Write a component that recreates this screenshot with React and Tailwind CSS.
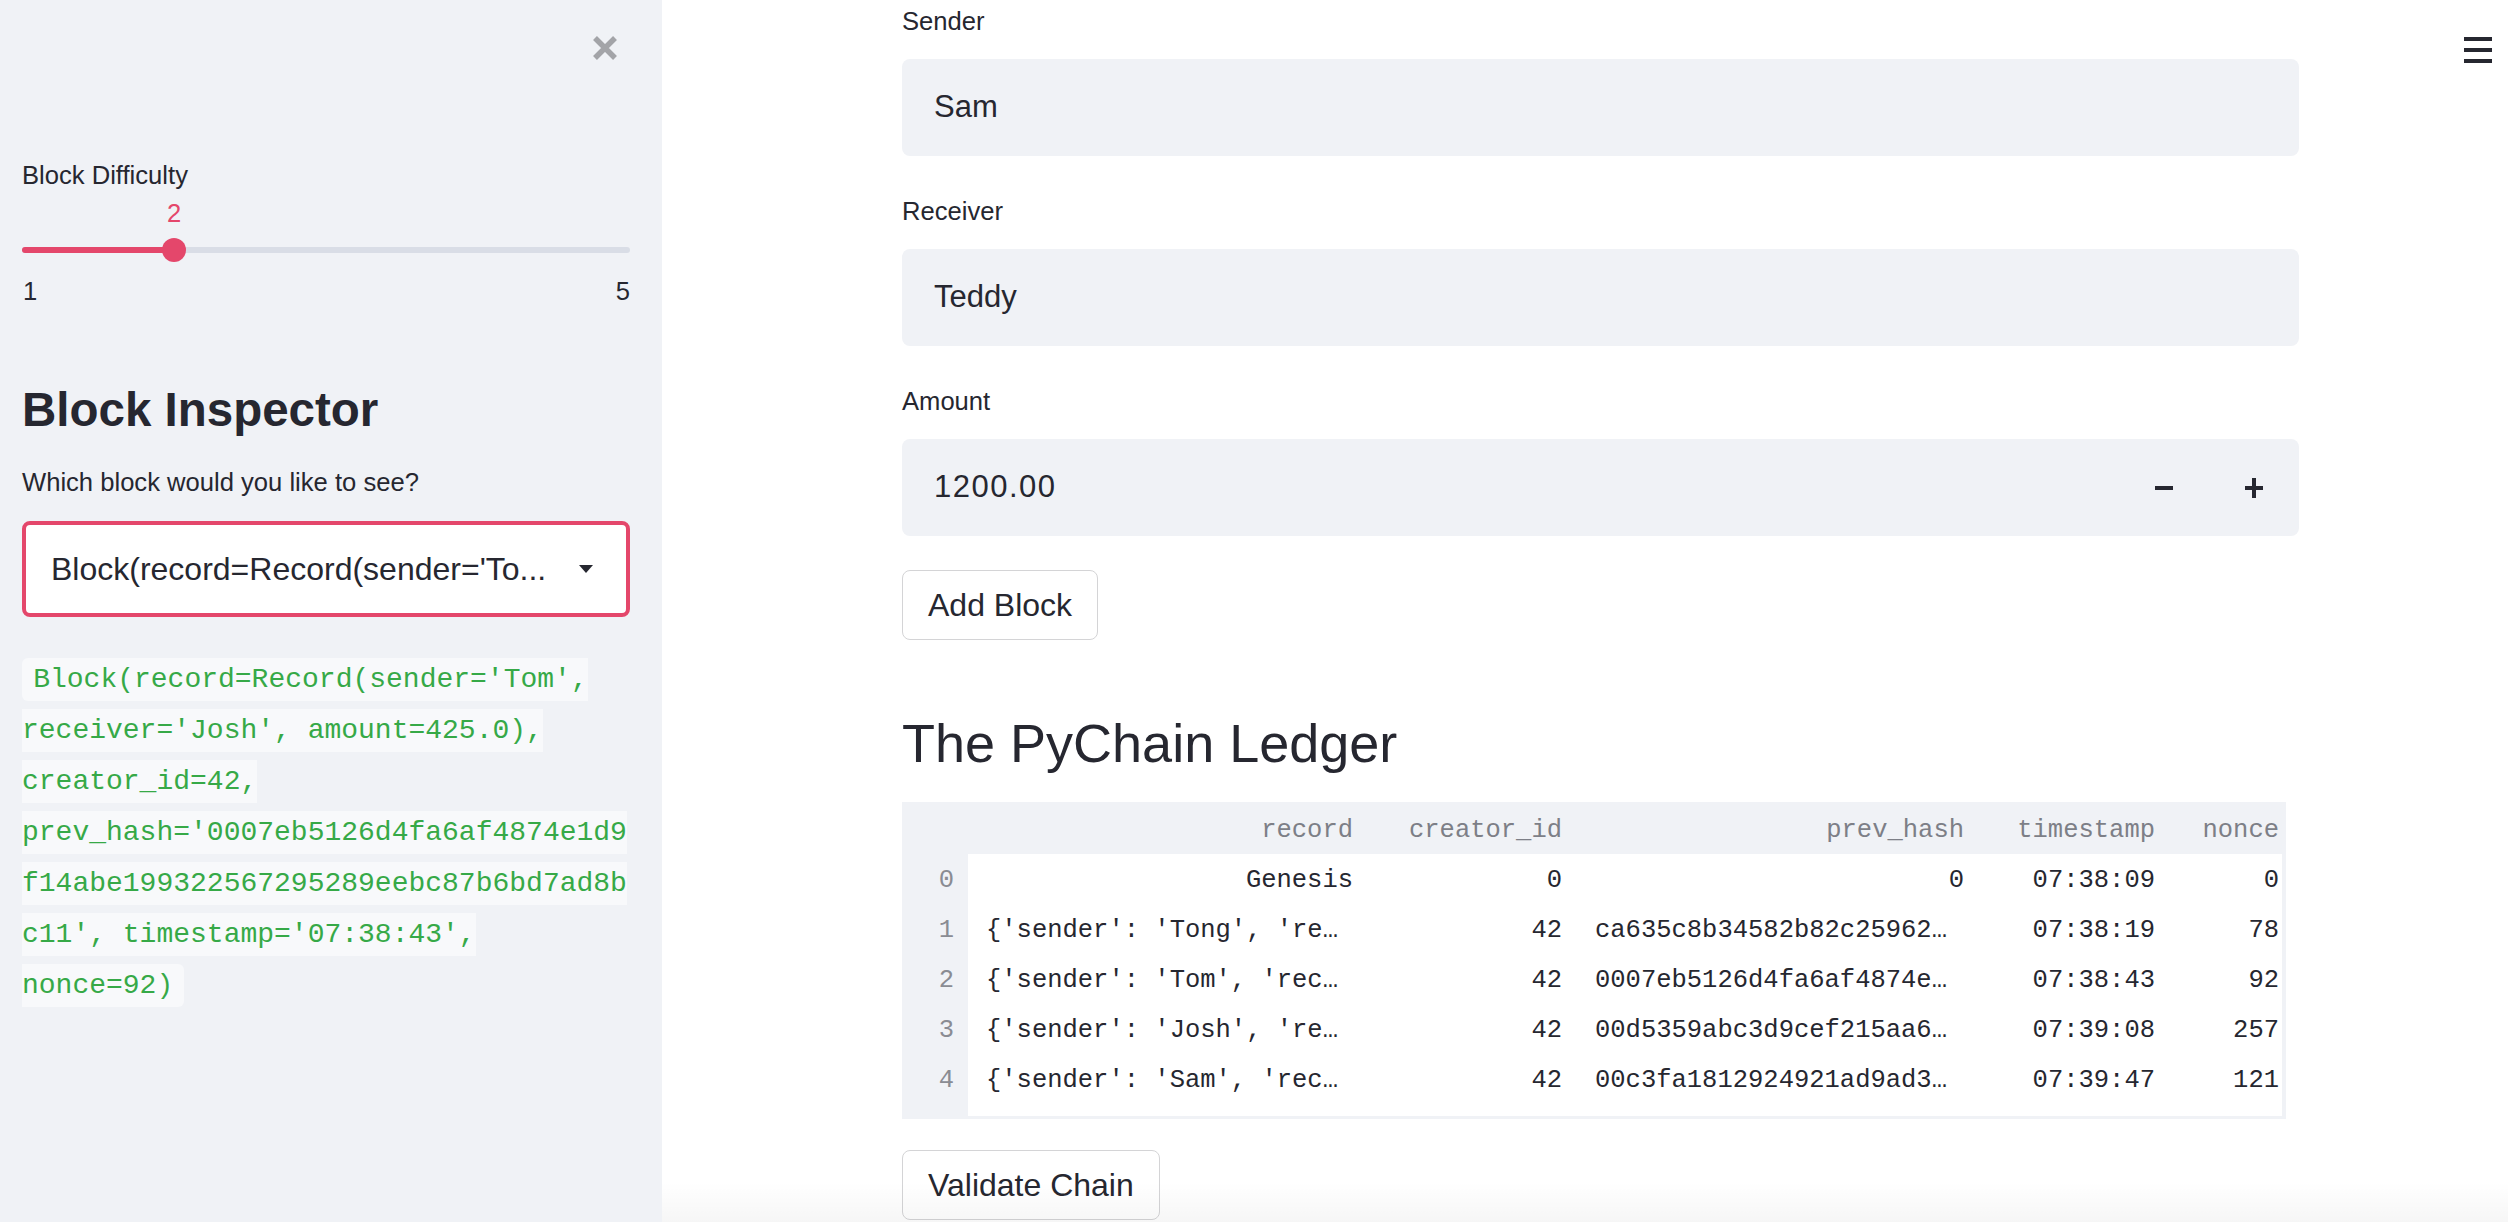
export default function App() {
  const rows = [
    { i: "0", rec: "Genesis", recLeft: false, cid: "0", ph: "0", phLeft: false, ts: "07:38:09", n: "0" },
    { i: "1", rec: "{'sender': 'Tong', 're…", recLeft: true, cid: "42", ph: "ca635c8b34582b82c25962…", phLeft: true, ts: "07:38:19", n: "78" },
    { i: "2", rec: "{'sender': 'Tom', 'rec…", recLeft: true, cid: "42", ph: "0007eb5126d4fa6af4874e…", phLeft: true, ts: "07:38:43", n: "92" },
    { i: "3", rec: "{'sender': 'Josh', 're…", recLeft: true, cid: "42", ph: "00d5359abc3d9cef215aa6…", phLeft: true, ts: "07:39:08", n: "257" },
    { i: "4", rec: "{'sender': 'Sam', 'rec…", recLeft: true, cid: "42", ph: "00c3fa1812924921ad9ad3…", phLeft: true, ts: "07:39:47", n: "121" },
  ];

  return (
    <div className="relative flex h-[1222px] w-[2508px] overflow-hidden bg-white font-['Liberation_Sans',Arial,sans-serif] text-[#262730]">
      {/* Sidebar */}
      <aside className="flex w-[662px] shrink-0 flex-col bg-[#f0f2f6] pl-[22px] pr-[32px]">
        <div className="flex h-[96px] items-center justify-end pr-[12px]">
          <svg width="26" height="26" viewBox="0 0 26 26">
            <path d="M3 3 L23 23 M23 3 L3 23" stroke="#a3a4a8" strokeWidth="5.5" strokeLinecap="butt" fill="none" />
          </svg>
        </div>

        <div className="mt-[59px] flex h-[40px] items-center text-[25.6px]">Block Difficulty</div>

        <div className="mt-[8px] flex h-[20px] items-center pl-[145px] text-[25.6px] text-[#e4476b]">2</div>

        <div className="relative mt-[15px] h-[24px] w-[608px]">
          <div className="absolute left-0 right-0 top-[9px] h-[6px] rounded-full bg-[#d9dde6]" />
          <div className="absolute left-0 top-[9px] h-[6px] w-[152px] rounded-full bg-[#e4476b]" />
          <div className="absolute left-[140px] top-0 h-[24px] w-[24px] rounded-full bg-[#e4476b]" />
        </div>

        <div className="mt-[19px] flex h-[20px] w-[608px] items-center justify-between text-[25.6px]">
          <span className="pl-[1px]">1</span>
          <span>5</span>
        </div>

        <div className="mt-[84px] flex h-[50px] items-center text-[47.5px] font-bold">Block Inspector</div>

        <div className="mt-[32px] flex h-[30px] items-center text-[25.6px]">Which block would you like to see?</div>

        <div className="mt-[24px] flex h-[96px] w-[608px] items-center justify-between rounded-[8px] border-[4px] border-[#e4476b] bg-white pl-[25px] pr-[33px]">
          <span className="whitespace-nowrap text-[32px]">Block(record=Record(sender='To...</span>
          <svg width="14" height="8" viewBox="0 0 14 8">
            <path d="M0 0 L14 0 L7 8 Z" fill="#262730" />
          </svg>
        </div>

        <p className="mt-[37px] w-[608px] break-words font-['Liberation_Mono',monospace] text-[32px] leading-[50px]">
          <code className="rounded-[6px] bg-[#f8f9fb] px-[0.4em] py-[0.2em] font-['Liberation_Mono',monospace] text-[28px] text-[#36a947]">
            Block(record=Record(sender='Tom', receiver='Josh', amount=425.0), creator_id=42, prev_hash='0007eb5126d4fa6af4874e1d9f14abe199322567295289eebc87b6bd7ad8bc11', timestamp='07:38:43', nonce=92)
          </code>
        </p>
      </aside>

      {/* Main */}
      <main className="flex-1">
        <div className="ml-[240px] flex w-[1397px] flex-col">
          <div className="mt-[1px] flex h-[40px] items-center text-[25.6px]">Sender</div>
          <div className="mt-[18px] flex h-[97px] items-center rounded-[8px] bg-[#f0f2f6] pl-[32px] text-[31px]">Sam</div>

          <div className="mt-[35px] flex h-[40px] items-center text-[25.6px]">Receiver</div>
          <div className="mt-[18px] flex h-[97px] items-center rounded-[8px] bg-[#f0f2f6] pl-[32px] text-[31px]">Teddy</div>

          <div className="mt-[35px] flex h-[40px] items-center text-[25.6px]">Amount</div>
          <div className="mt-[18px] flex h-[97px] items-center rounded-[8px] bg-[#f0f2f6] pl-[32px] pr-[36px]">
            <span className="text-[31px] tracking-[1.5px]">1200.00</span>
            <div className="ml-auto flex items-center gap-[72px]">
              <div className="h-[4px] w-[18px] bg-[#262730]" />
              <div className="relative h-[20px] w-[18px]">
                <div className="absolute left-0 top-[8px] h-[4px] w-[18px] bg-[#262730]" />
                <div className="absolute left-[7px] top-0 h-[20px] w-[4px] bg-[#262730]" />
              </div>
            </div>
          </div>

          <div className="mt-[34px] flex">
            <button className="flex h-[70px] items-center rounded-[8px] border border-[#d4d4d6] bg-white px-[25px] text-[32px] text-[#262730]">Add Block</button>
          </div>

          <h2 className="mt-[68px] flex h-[70px] items-center text-[54px] font-normal">The PyChain Ledger</h2>

          <div className="mt-[24px] w-[1384px] bg-[#f0f2f6] pb-[3px] pr-[4px] font-['Liberation_Mono',monospace] text-[25.5px]">
            <div className="grid h-[52px] grid-cols-[66px_413px_197px_412px_191px_101px] items-center pt-[6px] text-[#7d7f87]">
              <div />
              <div className="pr-[28px] text-right">record</div>
              <div className="pr-[16px] text-right">creator_id</div>
              <div className="pr-[26px] text-right">prev_hash</div>
              <div className="pr-[26px] text-right">timestamp</div>
              <div className="pr-[3px] text-right">nonce</div>
            </div>
            <div className="flex">
              <div className="flex w-[66px] flex-col text-[#8a8c93]">
                {rows.map((r) => (
                  <div key={r.i} className="flex h-[50px] items-center justify-end pr-[14px] pt-[5px]">{r.i}</div>
                ))}
              </div>
              <div className="flex flex-1 flex-col bg-white pb-[12px]">
                {rows.map((r) => (
                  <div key={r.i} className="grid h-[50px] grid-cols-[413px_197px_412px_191px_101px] items-center whitespace-pre pt-[5px]">
                    <div className={r.recLeft ? "pl-[18px] text-left" : "pr-[28px] text-right"}>{r.rec}</div>
                    <div className="pr-[16px] text-right">{r.cid}</div>
                    <div className={r.phLeft ? "pl-[17px] text-left" : "pr-[26px] text-right"}>{r.ph}</div>
                    <div className="pr-[26px] text-right">{r.ts}</div>
                    <div className="pr-[3px] text-right">{r.n}</div>
                  </div>
                ))}
              </div>
            </div>
          </div>

          <div className="mt-[31px] flex">
            <button className="flex h-[70px] items-center rounded-[8px] border border-[#d4d4d6] bg-white px-[25px] text-[32px] text-[#262730]">Validate Chain</button>
          </div>
        </div>
      </main>

      {/* Hamburger menu */}
      <div className="absolute right-[16px] top-[37px] flex w-[28px] flex-col gap-[7px]">
        <div className="h-[4px] w-[28px] bg-[#262730]" />
        <div className="h-[4px] w-[28px] bg-[#262730]" />
        <div className="h-[4px] w-[28px] bg-[#262730]" />
      </div>

      {/* bottom fade */}
      <div className="pointer-events-none absolute bottom-0 left-[662px] right-0 h-[40px] bg-gradient-to-b from-transparent to-black/[0.035]" />
    </div>
  );
}
